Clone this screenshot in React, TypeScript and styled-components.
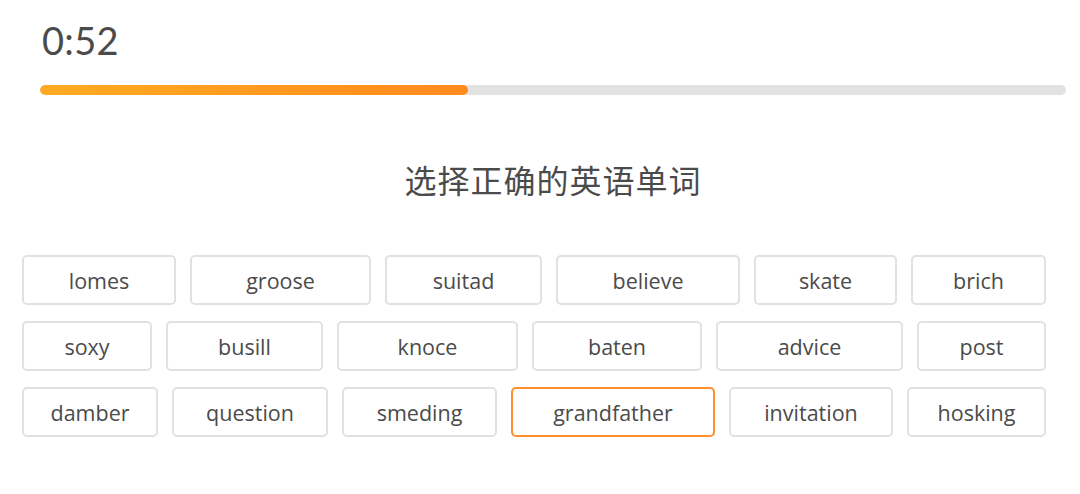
import React from "react";
import styled, { createGlobalStyle } from "styled-components";

const GlobalStyle = createGlobalStyle`
	body {
		margin: 0;
		background: #ffffff;
		font-family: "Open Sans", "Noto Sans CJK SC", sans-serif;
	}
`;

const rows = [
	[
		{ word: "lomes", w: 154 },
		{ word: "groose", w: 181 },
		{ word: "suitad", w: 157 },
		{ word: "believe", w: 184 },
		{ word: "skate", w: 143 },
		{ word: "brich", w: 135 },
	],
	[
		{ word: "soxy", w: 130 },
		{ word: "busill", w: 157 },
		{ word: "knoce", w: 181 },
		{ word: "baten", w: 170 },
		{ word: "advice", w: 187 },
		{ word: "post", w: 129 },
	],
	[
		{ word: "damber", w: 136 },
		{ word: "question", w: 156 },
		{ word: "smeding", w: 155 },
		{ word: "grandfather", w: 204, selected: true },
		{ word: "invitation", w: 164 },
		{ word: "hosking", w: 139 },
	],
];

const App = () => {
	const progress = 0.417;

	return (
		<Page>
			<GlobalStyle />
			<Header>
				<Timer>0:52</Timer>
				<Track>
					<Fill style={{ width: `${progress * 100}%` }} />
				</Track>
			</Header>

			<Title>选择正确的英语单词</Title>

			<Words>
				{rows.map((row, i) => (
					<Row key={i}>
						{row.map((item) => (
							<WordButton key={item.word} $w={item.w} $selected={!!item.selected}>
								{item.word}
							</WordButton>
						))}
					</Row>
				))}
			</Words>
		</Page>
	);
};

export default App;

const Page = styled.div`
	width: 1080px;
	height: 494px;
	overflow: hidden;
`;

const Header = styled.div`
	padding: 14px 14px 0 40px;
`;

const Timer = styled.div`
	font-family: Lato, sans-serif;
	font-size: 38px;
	line-height: 52px;
	color: #4b4b4b;
	padding-left: 2px;
	letter-spacing: 0.3px;
`;

const Track = styled.div`
	margin-top: 19px;
	height: 10px;
	border-radius: 5px;
	background: #e2e2e2;
	overflow: hidden;
`;

const Fill = styled.div`
	height: 100%;
	border-radius: 5px;
	background: linear-gradient(90deg, #ffab22 0%, #ff8a1e 100%);
`;

const Title = styled.h1`
	margin: 62px 14px 0 40px;
	text-align: center;
	font-family: "Noto Sans CJK SC", sans-serif;
	font-weight: 400;
	font-size: 32px;
	line-height: 44px;
	letter-spacing: 1px;
	color: #4b4b4b;
`;

const Words = styled.div`
	margin: 54px 34px 0 22px;
	display: flex;
	flex-direction: column;
	gap: 16px;
`;

const Row = styled.div`
	display: flex;
	gap: 14px;
`;

const WordButton = styled.div<{ $w: number; $selected: boolean }>`
	box-sizing: border-box;
	width: ${(p) => p.$w}px;
	height: 50px;
	display: flex;
	align-items: center;
	justify-content: center;
	border: 2px solid ${(p) => (p.$selected ? "#ff8f2a" : "#e1e1e1")};
	border-radius: 5px;
	font-size: 21.5px;
	color: #4b4b4b;
	background: #ffffff;
`;
